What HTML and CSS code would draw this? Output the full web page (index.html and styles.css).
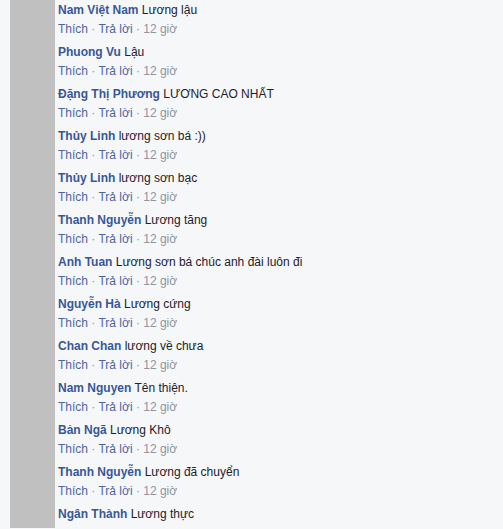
FILE: index.html
```html
<!DOCTYPE html>
<html lang="vi">
<head>
<meta charset="utf-8">
<link rel="stylesheet" href="styles.css">
</head>
<body>
<div class="page">
  <div class="avatar-col"></div>
  <div class="comments">
    <div class="comment"><div class="line"><a class="name">Nam Việt Nam</a> Lương lậu</div><div class="actions"><a>Thích</a> · <a>Trả lời</a> · <span class="time">12 giờ</span></div></div>
    <div class="comment"><div class="line"><a class="name">Phuong Vu</a> Lậu</div><div class="actions"><a>Thích</a> · <a>Trả lời</a> · <span class="time">12 giờ</span></div></div>
    <div class="comment"><div class="line"><a class="name">Đặng Thị Phương</a> LƯƠNG CAO NHẤT</div><div class="actions"><a>Thích</a> · <a>Trả lời</a> · <span class="time">12 giờ</span></div></div>
    <div class="comment"><div class="line"><a class="name">Thủy Linh</a> lương sơn bá :))</div><div class="actions"><a>Thích</a> · <a>Trả lời</a> · <span class="time">12 giờ</span></div></div>
    <div class="comment"><div class="line"><a class="name">Thủy Linh</a> lương sơn bạc</div><div class="actions"><a>Thích</a> · <a>Trả lời</a> · <span class="time">12 giờ</span></div></div>
    <div class="comment"><div class="line"><a class="name">Thanh Nguyễn</a> Lương tăng</div><div class="actions"><a>Thích</a> · <a>Trả lời</a> · <span class="time">12 giờ</span></div></div>
    <div class="comment"><div class="line"><a class="name">Anh Tuan</a> Lương sơn bá chúc anh đài luôn đi</div><div class="actions"><a>Thích</a> · <a>Trả lời</a> · <span class="time">12 giờ</span></div></div>
    <div class="comment"><div class="line"><a class="name">Nguyễn Hà</a> Lương cứng</div><div class="actions"><a>Thích</a> · <a>Trả lời</a> · <span class="time">12 giờ</span></div></div>
    <div class="comment"><div class="line"><a class="name">Chan Chan</a> lương về chưa</div><div class="actions"><a>Thích</a> · <a>Trả lời</a> · <span class="time">12 giờ</span></div></div>
    <div class="comment"><div class="line"><a class="name">Nam Nguyen</a> Tên thiện.</div><div class="actions"><a>Thích</a> · <a>Trả lời</a> · <span class="time">12 giờ</span></div></div>
    <div class="comment"><div class="line"><a class="name">Bản Ngã</a> Lương Khô</div><div class="actions"><a>Thích</a> · <a>Trả lời</a> · <span class="time">12 giờ</span></div></div>
    <div class="comment"><div class="line"><a class="name">Thanh Nguyễn</a> Lương đã chuyển</div><div class="actions"><a>Thích</a> · <a>Trả lời</a> · <span class="time">12 giờ</span></div></div>
    <div class="comment"><div class="line"><a class="name">Ngân Thành</a> Lương thực</div></div>
  </div>
</div>
</body>
</html>
```
FILE: styles.css
```css
html, body {
  margin: 0;
  padding: 0;
  background: #f6f7f9;
  height: 100%;
  overflow: hidden;
}
body {
  font-family: "Liberation Sans", Arial, sans-serif;
  font-size: 12px;
  color: #1d2129;
}
.page {
  display: flex;
  align-items: flex-start;
}
.avatar-col {
  flex: 0 0 45px;
  margin-left: 10px;
  height: 528px;
  background: #c0c0c0;
}
.comments {
  padding-left: 3px;
  padding-top: 2px;
  display: flex;
  flex-direction: column;
  gap: 7px;
}
.comment {
  display: flex;
  flex-direction: column;
  gap: 3px;
}
.line, .actions {
  line-height: 16px;
  white-space: nowrap;
}
.name {
  font-weight: bold;
  color: #365899;
}
.actions {
  color: #90949c;
}
.actions a {
  color: #4b67a1;
}
.time {
  color: #90949c;
}
```
